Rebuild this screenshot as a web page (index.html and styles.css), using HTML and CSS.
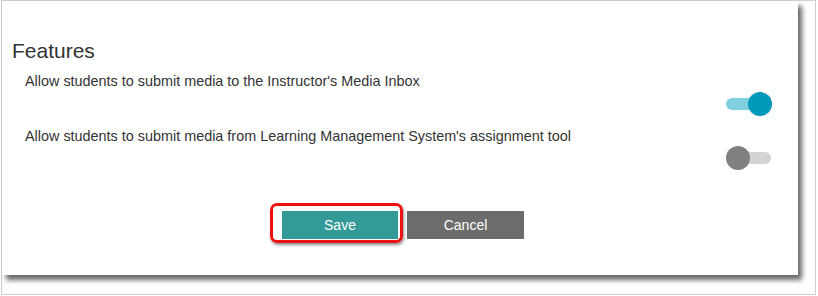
FILE: index.html
```html
<!DOCTYPE html>
<html lang="en">
<head>
    <meta charset="UTF-8">
    <title>Features</title>
    <link rel="stylesheet" href="styles.css">
</head>
<body>
    <div class="frame">
        <div class="card">
            <h2 class="title">Features</h2>

            <div class="feature">
                <div class="feature-label">Allow students to submit media to the Instructor's Media Inbox</div>
                <div class="feature-control"><span class="toggle on"></span></div>
            </div>

            <div class="feature">
                <div class="feature-label">Allow students to submit media from Learning Management System's assignment tool</div>
                <div class="feature-control"><span class="toggle"></span></div>
            </div>

            <div class="actions">
                <span class="highlight">
                    <button class="btn btn-save">Save</button>
                </span>
                <button class="btn btn-cancel">Cancel</button>
            </div>
        </div>
    </div>
</body>
</html>
```

FILE: styles.css
```css
body {
    margin: 0;
    padding: 0;
    background-color: white;
    font-family: "Liberation Sans", Arial, sans-serif;
    color: #333;
}
.frame {
    width: 813px;
    height: 293px;
    margin-left: 1px;
    border: 1px solid #cfcfcf;
}
.card {
    width: 796px;
    height: 274px;
    padding-top: 38px;
    box-sizing: border-box;
    background-color: white;
    box-shadow: 4px 5px 5px rgba(0, 0, 0, 0.6);
}
.title {
    margin: 0 0 0 10px;
    font-size: 21px;
    line-height: 24px;
    font-weight: normal;
    color: #333;
}
.feature-label {
    margin: 9px 0 0 23px;
    font-size: 14.4px;
    line-height: 18px;
}
.feature + .feature .feature-label {
    margin-top: 11px;
}
.feature-control {
    display: flex;
    justify-content: flex-end;
    margin-top: 2px;
    margin-right: 26px;
}
.feature + .feature .feature-control {
    margin-top: 1px;
}
.toggle {
    position: relative;
    display: block;
    width: 46px;
    height: 24px;
}
.toggle::before {
    content: "";
    position: absolute;
    left: 0;
    right: 1px;
    top: 6px;
    height: 12px;
    border-radius: 6px;
    background-color: #d3d3d3;
}
.toggle::after {
    content: "";
    position: absolute;
    left: 0;
    top: 0;
    width: 24px;
    height: 24px;
    border-radius: 50%;
    background-color: #808080;
}
.toggle.on::before {
    background-color: #80cfdf;
}
.toggle.on::after {
    left: 22px;
    background-color: #0099b8;
}
.actions {
    display: flex;
    justify-content: center;
    gap: 9px;
    margin-top: 41px;
    padding-left: 6px;
}
.highlight {
    position: relative;
    display: block;
}
.highlight::after {
    content: "";
    position: absolute;
    left: -12px;
    right: -5px;
    top: -8px;
    bottom: -4px;
    border: 3px solid #ee1111;
    border-radius: 7px;
    box-shadow: 1px 2px 3px rgba(0, 0, 0, 0.45);
    pointer-events: none;
}
.btn {
    display: block;
    height: 28px;
    border: none;
    padding: 0;
    font-family: "Liberation Sans", Arial, sans-serif;
    font-size: 14px;
    color: white;
    cursor: pointer;
}
.btn-save {
    width: 116px;
    background-color: #349a98;
}
.btn-cancel {
    width: 117px;
    background-color: #6c6c6d;
}
```
